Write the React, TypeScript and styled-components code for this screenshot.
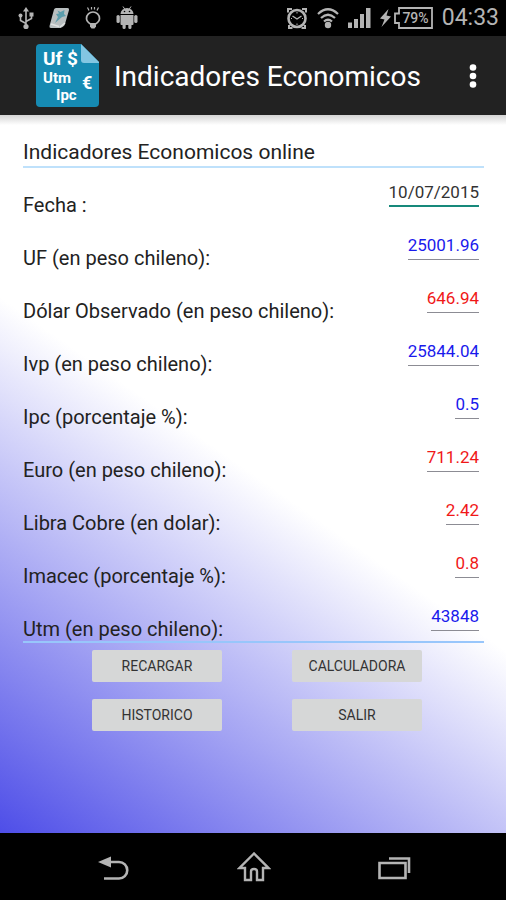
import React from "react";
import styled, { createGlobalStyle } from "styled-components";

const GlobalStyle = createGlobalStyle`
  * { box-sizing: border-box; }
  body { margin: 0; background: #000; font-family: Roboto, "Noto Sans", sans-serif; }
`;

const Screen = styled.div`
  display: flex;
  flex-direction: column;
  min-height: 100vh;
`;

const StatusBar = styled.div`
  display: flex;
  align-items: center;
  justify-content: space-between;
  height: 36px;
  padding: 0 7px 0 18px;
  background: #000;
  color: #b4b4b4;
`;

const StatusGroup = styled.div<{ $gap: number }>`
  display: flex;
  align-items: center;
  gap: ${(p) => p.$gap}px;

  svg { display: block; }
`;

const Power = styled.div`
  display: flex;
  align-items: center;
  gap: 3px;
`;

const Clock = styled.time`
  font-size: 23px;
  line-height: 36px;
`;

const AppBar = styled.header`
  display: flex;
  align-items: center;
  height: 79px;
  padding: 0 20px 0 36px;
  background: #222;
  color: #fff;
`;

const AppTitle = styled.h1`
  flex: 1;
  margin: 2px 0 0 14px;
  font-size: 28px;
  font-weight: 400;
  line-height: 36px;
  white-space: nowrap;
`;

const MenuButton = styled.button`
  display: flex;
  justify-content: center;
  width: 26px;
  padding: 8px 0;
  border: 0;
  background: none;
  color: #fff;
`;

const Content = styled.main`
  flex: 1;
  padding: 23px 22px 40px 23px;
  background:
    linear-gradient(#d4d4d4, rgba(255, 255, 255, 0) 10px),
    linear-gradient(35deg, #4e4ee8, #fff 50%, #fff);
`;

const Heading = styled.h2`
  margin: 0;
  border-bottom: 2px solid #bfe1fb;
  color: #222;
  font-size: 21px;
  font-weight: 400;
  line-height: 28px;
`;

const Indicators = styled.form`
  border-bottom: 2px solid #98c6fb;
`;

const Row = styled.div`
  display: flex;
  align-items: flex-end;
  justify-content: space-between;
  height: 53px;
  padding-right: 5px;

  &:first-child { height: 49px; }
`;

const Name = styled.label`
  color: #222;
  font-size: 20px;
  line-height: 24px;
  white-space: nowrap;
`;

const tones = { date: "#333", up: "#1a1aec", down: "#f01818" };
type Tone = keyof typeof tones;

const Value = styled.input<{ $tone: Tone }>`
  field-sizing: content;
  height: 26px;
  margin-bottom: 10px;
  padding: 0 0 3px;
  border: 0;
  border-bottom: ${(p) => (p.$tone === "date" ? "2px solid #17897b" : "1px solid #8c8c94")};
  border-radius: 0;
  outline: 0;
  background: none;
  color: ${(p) => tones[p.$tone]};
  font-family: inherit;
  font-size: 17px;
  line-height: 20px;
  text-align: right;
`;

const Actions = styled.div`
  display: grid;
  grid-template-columns: 1fr 1fr;
  gap: 17px 70px;
  padding: 7px 62px 0 69px;
`;

const ActionButton = styled.button`
  height: 32px;
  padding: 0;
  border: 0;
  border-radius: 2px;
  background: #d6d7d7;
  color: #333;
  font-family: inherit;
  font-size: 14px;
  line-height: 20px;
`;

const NavBar = styled.nav`
  display: flex;
  align-items: center;
  justify-content: space-between;
  height: 67px;
  padding: 2px 95px 0 94px;
  background: #000;
`;

const NavButton = styled.button`
  padding: 4px 0;
  border: 0;
  background: none;
  color: #b4b4b4;

  svg { display: block; }
`;

const UsbIcon = () => (
  <svg width="16" height="24" viewBox="0 0 16 24" fill="none" stroke="currentColor" strokeWidth="1.6">
    <path d="M8 4v15M8 17.500L2.500 14.500V10M8 15.500l5.500-3V8.500" />
    <path d="M8 1l3 4.500H5z" fill="currentColor" stroke="none" />
    <circle cx="8" cy="20.500" r="2.600" fill="currentColor" stroke="none" />
    <circle cx="2.500" cy="9.500" r="2" fill="currentColor" stroke="none" />
    <path d="M11.500 6.500h4v4h-4z" fill="currentColor" stroke="none" />
  </svg>
);

const NoteIcon = () => (
  <svg width="21" height="22" viewBox="0 0 21 22">
    <path d="M7 1h11.500q2 0 1.500 2l-4 14q-.5 2-2.500 3l-2 1H2q-2 0-1.500-2L5 2.500Q5.500 1 7 1z" fill="#b9bfc0" />
    <path d="M8.500 3.500l3 1.500 4-2-.5 4 2 2-4 1-7 6 3-6-2-3 3-.5z" fill="#5b9dac" />
    <path d="M2 17l8 2.500M11 20l5-4" stroke="#e0e2e2" strokeWidth="1.500" fill="none" />
  </svg>
);

const BulbIcon = () => (
  <svg width="16" height="24" viewBox="0 0 16 24" fill="none" stroke="currentColor" strokeWidth="1.700">
    <path d="M5.500 18C3 16.500 1.500 14.700 1.500 12.500a6.500 6.500 0 0 1 13 0c0 2.200-1.500 4-4 5.500" />
    <path d="M2.500 1.500l1.500 3M6.500 1v2.500M9.500 1v2.500M13.500 1.500l-1.500 3" strokeWidth="1.200" />
    <path d="M5 17h6v3.500l-1.500 2h-3L5 20.500z" fill="currentColor" stroke="none" />
  </svg>
);

const AndroidIcon = () => (
  <svg width="22" height="24" viewBox="0 0 22 24" fill="currentColor">
    <path d="M4.500 8a6.500 6 0 0 1 13 0z" />
    <path d="M7 .5l2 3M15 .5l-2 3" stroke="currentColor" />
    <circle cx="8.500" cy="5.500" r=".8" fill="#000" />
    <circle cx="13.500" cy="5.500" r=".8" fill="#000" />
    <path d="M4.500 9h13v9q0 1-1 1H15.500v2.500a1.600 1.600 0 0 1-3.200 0V19H9.700v2.500a1.600 1.600 0 0 1-3.200 0V19H5.500q-1 0-1-1z" />
    <rect x="0.500" y="9" width="3.300" height="8" rx="1.600" />
    <rect x="18.200" y="9" width="3.300" height="8" rx="1.600" />
  </svg>
);

const AlarmIcon = () => (
  <svg width="22" height="24" viewBox="0 0 22 24" fill="none" stroke="currentColor">
    <circle cx="11" cy="12.500" r="8.500" strokeWidth="2.600" />
    <path d="M6.500 10l4.500 3 4.500-3" strokeWidth="1.400" />
    <path d="M2 6.500V3h4M20 6.500V3h-4M3 19v3h3.500M19 19v3h-3.500" strokeWidth="2" />
    <path d="M11 6v1.500M11 17.500V19M5 12.500h1M16 12.500h1" />
  </svg>
);

const WifiIcon = () => (
  <svg width="22" height="22" viewBox="0 0 22 22" fill="none" stroke="currentColor" strokeWidth="2.200">
    <path d="M1 7q10-9.500 20 0M4 11q7-6.500 14 0M7 14.500q4-3.500 8 0" />
    <circle cx="11" cy="18" r="3.200" fill="currentColor" stroke="none" />
  </svg>
);

const SignalIcon = () => (
  <svg width="23" height="20" viewBox="0 0 23 20" fill="currentColor">
    <path d="M0 14.500h4V20H0zM6 11h4v9H6zM12 6h4v14h-4zM18 0h4.500v20H18z" />
  </svg>
);

const BoltIcon = () => (
  <svg width="11" height="18" viewBox="0 0 11 18" fill="currentColor">
    <path d="M8.500 0L0 9.500l4.500 1L1.500 18 11 7.500 6.500 6.500z" />
  </svg>
);

const BatteryIcon = () => (
  <svg width="39" height="22" viewBox="0 0 39 22">
    <path d="M5 1h33v20H5v-5H1V6.500h4z" fill="none" stroke="currentColor" strokeWidth="1.800" />
    <text x="21.500" y="16" textAnchor="middle" fill="currentColor" fontFamily="Roboto" fontSize="14" fontWeight="500">79%</text>
  </svg>
);

const AppLogo = () => (
  <svg width="64" height="64" viewBox="0 0 64 64" role="img" aria-label="Indicadores Economicos">
    <path d="M4 0h41l18 18v41q0 4-4 4H4q-4 0-4-4V4q0-4 4-4z" fill="#168ab2" />
    <path d="M45 0l18 18v1H48q-3 0-3-3z" fill="#83c6e2" />
    <g fill="#fff" fontFamily="Roboto" fontWeight="700">
      <text x="7" y="21" fontSize="19">Uf $</text>
      <text x="7" y="39" fontSize="15">Utm</text>
      <text x="46" y="45" fontSize="18">€</text>
      <text x="20" y="56" fontSize="15">Ipc</text>
    </g>
  </svg>
);

const MoreIcon = () => (
  <svg width="8" height="24" viewBox="0 0 8 24" fill="currentColor">
    <circle cx="4" cy="3.500" r="3.300" />
    <circle cx="4" cy="12" r="3.300" />
    <circle cx="4" cy="20.500" r="3.300" />
  </svg>
);

const BackIcon = () => (
  <svg width="36" height="32" viewBox="0 0 36 32" fill="none" stroke="currentColor" strokeWidth="2.600">
    <path d="M12 10h13a8.200 8.200 0 0 1 0 16.500H10" />
    <path d="M4 10l13-5.500v11z" fill="currentColor" stroke="none" />
  </svg>
);

const HomeIcon = () => (
  <svg width="34" height="32" viewBox="0 0 34 32" fill="none" stroke="currentColor" strokeWidth="2.400">
    <path d="M17 1.500L2.500 16H8v12h6v-8.500q0-2.500 3-2.500t3 2.500V28h6V16h5.500z" />
  </svg>
);

const RecentsIcon = () => (
  <svg width="34" height="32" viewBox="0 0 34 32" fill="none" stroke="currentColor" strokeWidth="2.600">
    <path d="M2.500 11h26v15h-26z" />
    <path d="M12 6.500h20V21" />
  </svg>
);

const indicators: { id: string; label: string; value: string; tone: Tone }[] = [
  { id: "fecha", label: "Fecha :", value: "10/07/2015", tone: "date" },
  { id: "uf", label: "UF (en peso chileno):", value: "25001.96", tone: "up" },
  { id: "dolar", label: "Dólar Observado (en peso chileno):", value: "646.94", tone: "down" },
  { id: "ivp", label: "Ivp (en peso chileno):", value: "25844.04", tone: "up" },
  { id: "ipc", label: "Ipc (porcentaje %):", value: "0.5", tone: "up" },
  { id: "euro", label: "Euro (en peso chileno):", value: "711.24", tone: "down" },
  { id: "cobre", label: "Libra Cobre (en dolar):", value: "2.42", tone: "down" },
  { id: "imacec", label: "Imacec (porcentaje %):", value: "0.8", tone: "down" },
  { id: "utm", label: "Utm (en peso chileno):", value: "43848", tone: "up" },
];

const actions = ["RECARGAR", "CALCULADORA", "HISTORICO", "SALIR"];

export default function App() {
  return (
    <Screen>
      <GlobalStyle />
      <StatusBar>
        <StatusGroup $gap={15}>
          <UsbIcon />
          <NoteIcon />
          <BulbIcon />
          <AndroidIcon />
        </StatusGroup>
        <StatusGroup $gap={9}>
          <AlarmIcon />
          <WifiIcon />
          <SignalIcon />
          <Power>
            <BoltIcon />
            <BatteryIcon />
          </Power>
          <Clock>04:33</Clock>
        </StatusGroup>
      </StatusBar>
      <AppBar>
        <AppLogo />
        <AppTitle>Indicadores Economicos</AppTitle>
        <MenuButton type="button" aria-label="Más opciones">
          <MoreIcon />
        </MenuButton>
      </AppBar>
      <Content>
        <Heading>Indicadores Economicos online</Heading>
        <Indicators>
          {indicators.map((item) => (
            <Row key={item.id}>
              <Name htmlFor={item.id}>{item.label}</Name>
              <Value id={item.id} $tone={item.tone} defaultValue={item.value} />
            </Row>
          ))}
        </Indicators>
        <Actions>
          {actions.map((name) => (
            <ActionButton key={name} type="button">{name}</ActionButton>
          ))}
        </Actions>
      </Content>
      <NavBar>
        <NavButton type="button" aria-label="Atrás"><BackIcon /></NavButton>
        <NavButton type="button" aria-label="Inicio"><HomeIcon /></NavButton>
        <NavButton type="button" aria-label="Recientes"><RecentsIcon /></NavButton>
      </NavBar>
    </Screen>
  );
}
